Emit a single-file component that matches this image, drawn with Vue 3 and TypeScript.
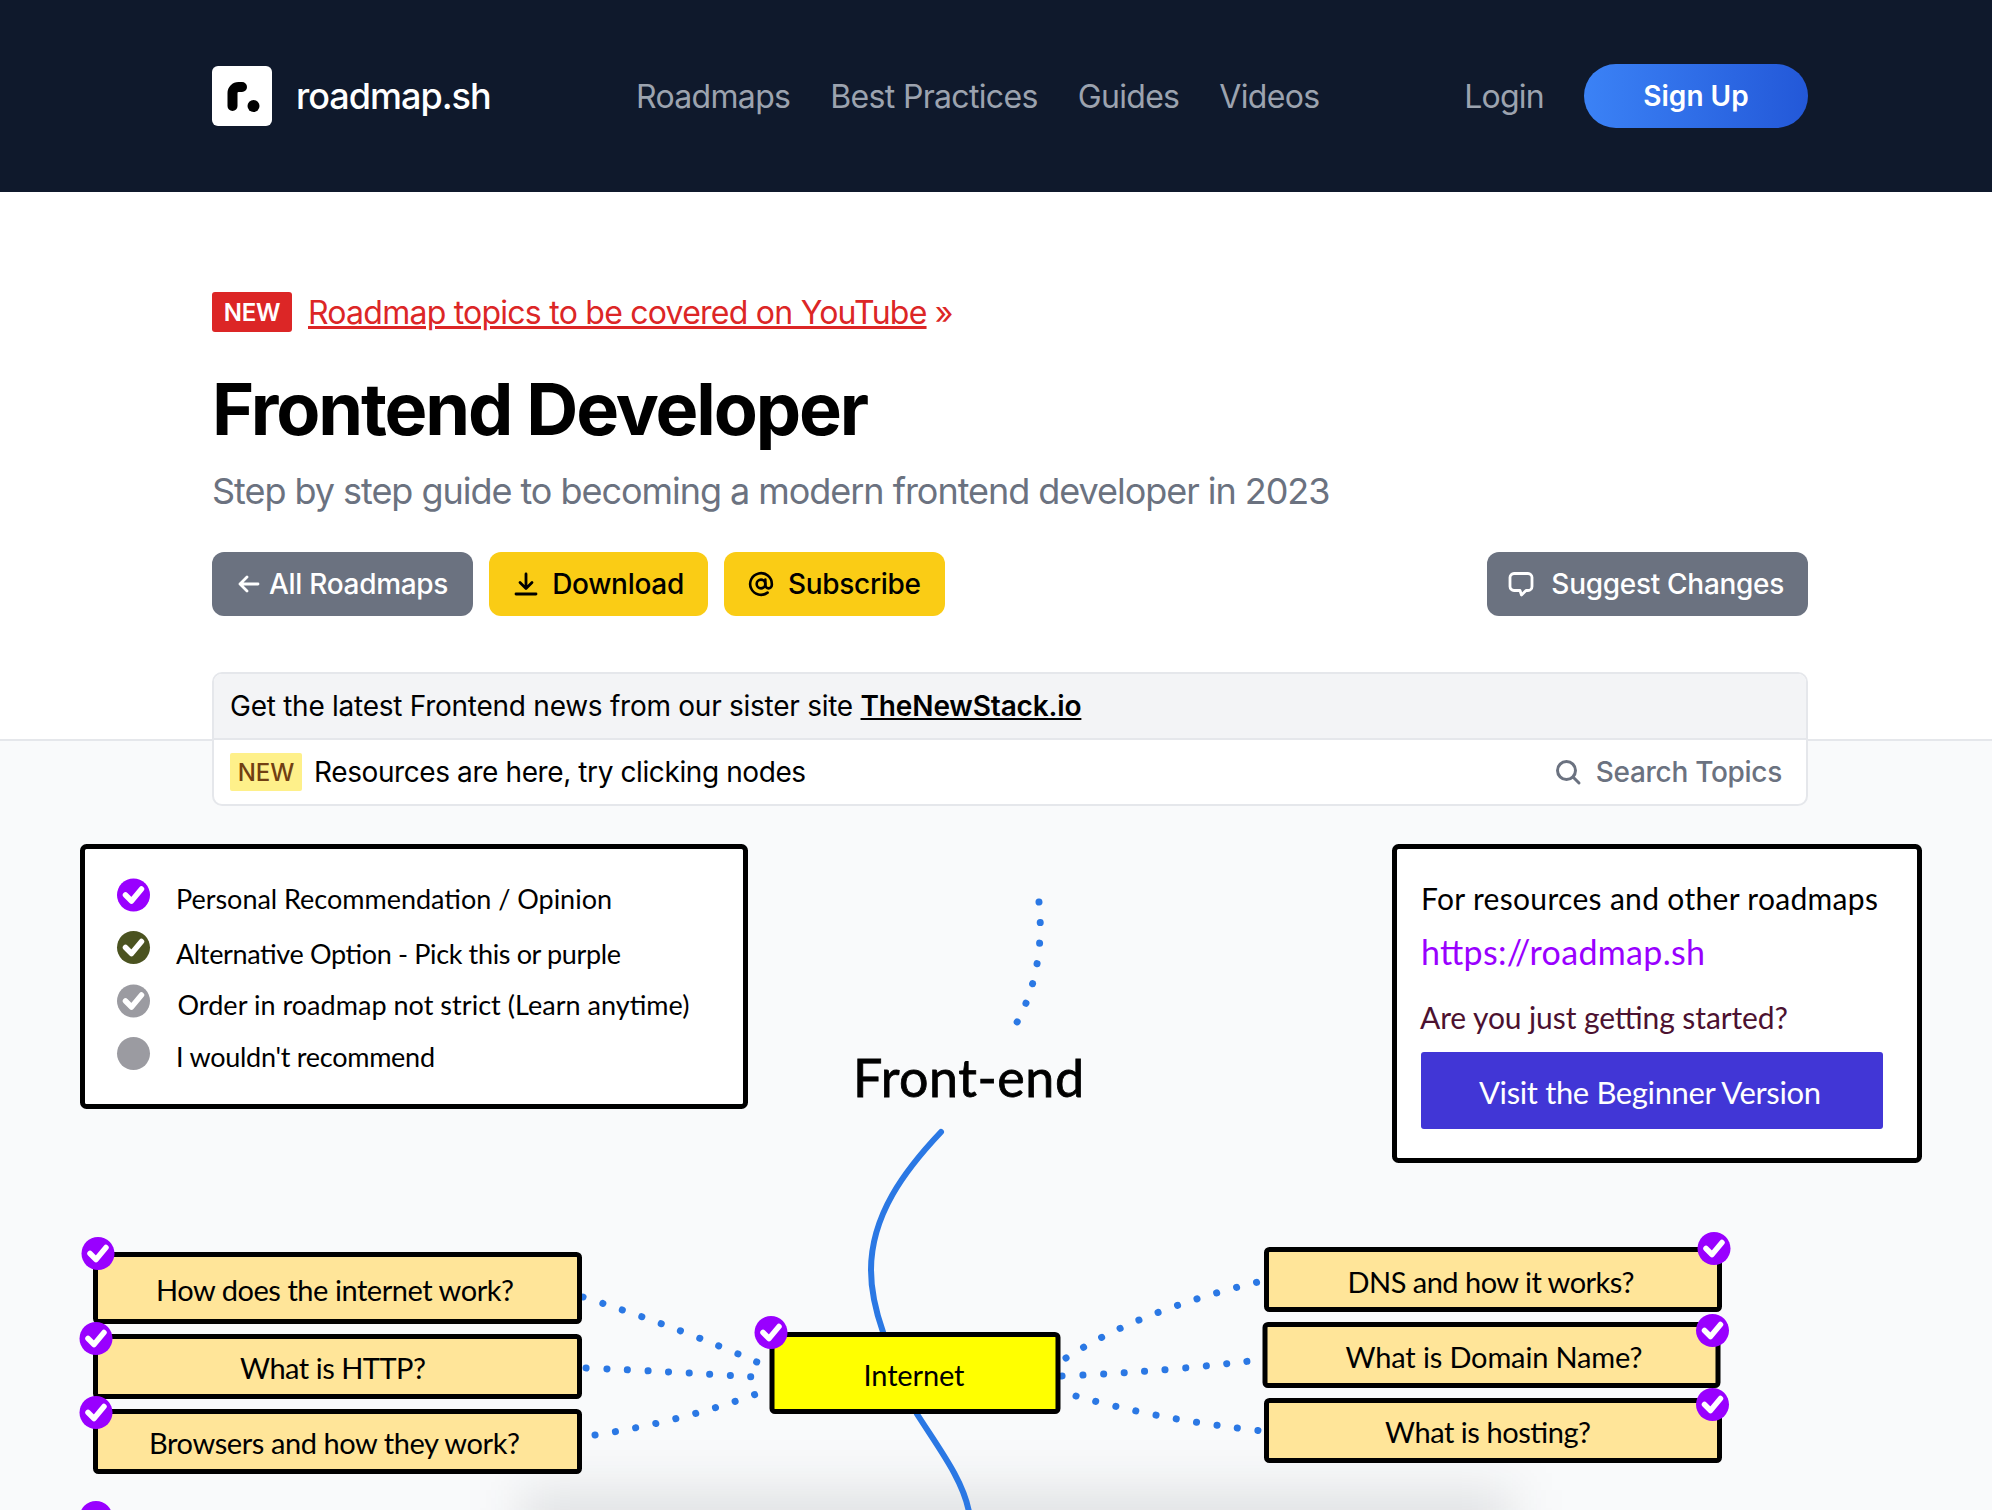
<script setup lang="ts">
type RoadNode = { label: string; x: number; y: number; w: number; h: number; tx: number; ty: number; len: number; cx: number; cy: number; fill?: string }

const nodes: RoadNode[] = [
  { label: "How does the internet work?", x: 95.5, y: 1254.5, w: 484, h: 67, tx: 335, ty: 1301, len: 358, cx: 98, cy: 1253.5 },
  { label: "What is HTTP?", x: 95.5, y: 1336.5, w: 484, h: 60, tx: 333, ty: 1379, len: 186, cx: 96, cy: 1338.5 },
  { label: "Browsers and how they work?", x: 95.5, y: 1411.5, w: 484, h: 60, tx: 334.5, ty: 1454, len: 371, cx: 96, cy: 1412.5 },
  { label: "Internet", x: 772, y: 1334.5, w: 286, h: 77, tx: 914, ty: 1386, len: 101, cx: 771, cy: 1332.5, fill: "#ffff00" },
  { label: "DNS and how it works?", x: 1266.5, y: 1249.5, w: 453, h: 60, tx: 1491, ty: 1293, len: 287, cx: 1714, cy: 1248.5 },
  { label: "What is Domain Name?", x: 1265, y: 1324.5, w: 453, h: 61, tx: 1494, ty: 1368, len: 297, cx: 1712.5, cy: 1330.5 },
  { label: "What is hosting?", x: 1266.5, y: 1400.5, w: 453, h: 60, tx: 1488, ty: 1443, len: 206, cx: 1712.5, cy: 1404.5 },
]

const legend = [
  { label: "Personal Recommendation / Opinion", color: "#9900ff", check: true, cy: 895, tx: 176, ty: 909, len: 436 },
  { label: "Alternative Option - Pick this or purple", color: "#4b5320", check: true, cy: 947.5, tx: 176, ty: 963.5, len: 445 },
  { label: "Order in roadmap not strict (Learn anytime)", color: "#9b9ba1", check: true, cy: 1001, tx: 177.5, ty: 1015, len: 512 },
  { label: "I wouldn't recommend", color: "#9b9ba1", check: false, cy: 1053.5, tx: 176, ty: 1067, len: 259 },
]

const dotted = [
  "M1039 902 C1043 940 1038 985 1016 1024",
  "M583 1297 Q680 1328 759 1363",
  "M586 1368 Q680 1372 753 1377",
  "M595 1435 Q680 1422 759 1393",
  "M1066 1358 Q1140 1310 1262 1281",
  "M1062 1376 Q1160 1372 1250 1361",
  "M1076 1396 Q1160 1420 1263 1431",
]

const extraChecks = [{ cx: 96, cy: 1517.5 }]
</script>

<template>
  <div class="page">
    <header class="nav">
      <div class="nav-inner">
        <a class="brand">
          <span class="logo">
            <svg width="60" height="60" viewBox="0 0 60 60">
              <path d="M20.500 40V27a6 6 0 0 1 6-6H30" fill="none" stroke="#000" stroke-width="10" stroke-linecap="round" stroke-linejoin="round" />
              <circle cx="41.500" cy="40" r="6" fill="#000" />
            </svg>
          </span>
          <span class="brand-name">roadmap.sh</span>
        </a>
        <nav class="links">
          <a>Roadmaps</a>
          <a>Best Practices</a>
          <a>Guides</a>
          <a>Videos</a>
        </nav>
        <div class="auth">
          <a class="login">Login</a>
          <a class="signup">Sign Up</a>
        </div>
      </div>
    </header>

    <section class="hero">
      <div class="announce">
        <span class="new-badge">NEW</span>
        <a class="announce-link"><u>Roadmap topics to be covered on YouTube</u> »</a>
      </div>
      <h1>Frontend Developer</h1>
      <p class="subtitle">Step by step guide to becoming a modern frontend developer in 2023</p>
      <div class="actions">
        <a class="btn grey back">
          <svg width="24" height="24" viewBox="0 0 24 24" fill="none" stroke="#fff" stroke-width="2.800" stroke-linecap="round" stroke-linejoin="round">
            <path d="M22 12H4M11 5l-7 7 7 7" />
          </svg>
          All Roadmaps
        </a>
        <a class="btn yellow">
          <svg width="28" height="28" viewBox="0 0 28 28" fill="none" stroke="#000" stroke-width="2.800" stroke-linecap="round" stroke-linejoin="round">
            <path d="M13 4v14M7 12.500l6 6 6-6M3 24h20" />
          </svg>
          Download
        </a>
        <a class="btn yellow subscribe">
          <svg width="26" height="26" viewBox="0 0 24 24" fill="none" stroke="#000" stroke-width="2.400" stroke-linecap="round" stroke-linejoin="round">
            <circle cx="12" cy="12" r="4" />
            <path d="M16 8v5a3 3 0 0 0 6 0v-1a10 10 0 1 0-3.920 7.940" />
          </svg>
          Subscribe
        </a>
        <a class="btn grey suggest">
          <svg width="28" height="28" viewBox="0 0 28 28" fill="none" stroke="#fff" stroke-width="2.800" stroke-linecap="round" stroke-linejoin="round">
            <path d="M7 3.500h14a4 4 0 0 1 4 4v9a4 4 0 0 1-4 4h-2l-4.500 4.500-1.500-4.500H7a4 4 0 0 1-4-4v-9a4 4 0 0 1 4-4z" />
          </svg>
          Suggest Changes
        </a>
      </div>
      <div class="notice">
        <div class="notice-top">Get the latest Frontend news from our sister site <a class="newstack">TheNewStack.io</a></div>
        <div class="notice-bottom">
          <span class="new-soft">NEW</span>
          <span class="resources">Resources are here, try clicking nodes</span>
          <span class="search">
            <svg width="28" height="28" viewBox="0 0 28 28" fill="none" stroke="#6b7280" stroke-width="3" stroke-linecap="round">
              <circle cx="12.500" cy="12.500" r="9" />
              <path d="M19.500 19.500l5.500 5.500" />
            </svg>
            Search Topics
          </span>
        </div>
      </div>
    </section>

    <main class="canvas">
      <div class="fade"></div>
      <svg class="roadmap" width="1992" height="769" viewBox="0 741 1992 769">
        <rect x="82.500" y="846.500" width="663" height="260" rx="4" class="panel" />
        <g v-for="item in legend" :key="item.label">
          <circle cx="133.500" :cy="item.cy" r="16.500" :fill="item.color" />
          <path v-if="item.check" :d="`M125.500 ${item.cy} l6 6 l10 -12`" class="check" />
          <text :x="item.tx" :y="item.ty" :textLength="item.len" class="legend-text">{{ item.label }}</text>
        </g>

        <rect x="1394.500" y="846.500" width="525" height="314" rx="4" class="panel" />
        <text x="1421" y="910" textLength="457" class="info-text">For resources and other roadmaps</text>
        <text x="1421" y="965" textLength="284" class="info-link">https://roadmap.sh</text>
        <text x="1420" y="1029" textLength="368" class="info-dark">Are you just getting started?</text>
        <rect x="1421" y="1052" width="462" height="77" rx="3" fill="#4136d6" />
        <text x="1650" y="1104" text-anchor="middle" textLength="342" class="info-btn">Visit the Beginner Version</text>

        <text x="853" y="1097" textLength="231" class="title">Front-end</text>

        <path d="M941 1132 C905 1170 871 1215 871 1270 C871 1292 876 1312 883 1332" class="line" />
        <path d="M917 1414 C940 1450 963 1480 969 1512" class="line" />
        <path v-for="d in dotted" :key="d" :d="d" class="dots" />

        <g v-for="node in nodes" :key="node.label">
          <rect :x="node.x" :y="node.y" :width="node.w" :height="node.h" rx="3" :fill="node.fill || '#ffe599'" class="box" />
          <text :x="node.tx" :y="node.ty" :textLength="node.len" text-anchor="middle" class="node-text">{{ node.label }}</text>
          <circle :cx="node.cx" :cy="node.cy" r="16.500" fill="#9900ff" />
          <path :d="`M${node.cx - 8} ${node.cy} l6 6 l10 -12`" class="check" />
        </g>
        <circle v-for="c in extraChecks" :key="c.cy" :cx="c.cx" :cy="c.cy" r="16.500" fill="#9900ff" />
      </svg>
    </main>
  </div>
</template>

<style>
html,
body {
  margin: 0;
  background: #fff;
}
</style>

<style scoped>
.page {
  width: 1992px;
  height: 1510px;
  overflow: hidden;
  font-family: Inter, "Liberation Sans", sans-serif;
  color: #000;
}

a {
  text-decoration: none;
}

.nav {
  height: 192px;
  background: #0f192c;
}

.nav-inner {
  display: flex;
  align-items: center;
  height: 192px;
  padding: 0 184px 0 212px;
}

.brand {
  display: flex;
  align-items: center;
  gap: 24px;
  color: #fff;
  width: 424px;
}

.logo {
  display: block;
  width: 60px;
  height: 60px;
  background: #fff;
  border-radius: 6px;
}

.logo svg {
  display: block;
}

.brand-name {
  font-size: 36px;
  font-weight: 500;
  letter-spacing: -1px;
}

.links {
  display: flex;
  gap: 40px;
  font-size: 32px;
  letter-spacing: -0.67px;
  color: #9ca3af;
}

.auth {
  margin-left: auto;
  display: flex;
  align-items: center;
  gap: 40px;
  font-size: 32px;
}

.login {
  color: #9ca3af;
  letter-spacing: -0.75px;
}

.signup {
  display: flex;
  align-items: center;
  justify-content: center;
  width: 224px;
  height: 64px;
  border-radius: 32px;
  color: #fff;
  font-weight: 600;
  font-size: 28px;
  background: linear-gradient(to right, #3b82f6, #2358d8);
}

.hero {
  height: 547px;
  box-sizing: border-box;
  padding: 100px 184px 0 212px;
  position: relative;
}

.announce {
  display: flex;
  align-items: center;
  gap: 16px;
  height: 40px;
}

.new-badge {
  display: flex;
  align-items: center;
  justify-content: center;
  width: 80px;
  height: 40px;
  background: #dc2626;
  color: #fff;
  font-size: 24px;
  font-weight: 600;
  letter-spacing: -0.2px;
  border-radius: 3px;
}

.announce-link {
  font-size: 32px;
  letter-spacing: -0.76px;
  color: #dc2626;
}

h1 {
  margin: 37px 0 0;
  font-size: 72px;
  line-height: 80px;
  font-weight: 700;
  letter-spacing: -2.1px;
}

.subtitle {
  margin: 18px 0 0;
  font-size: 36px;
  line-height: 48px;
  letter-spacing: -1.04px;
  color: #6b7280;
}

.actions {
  display: flex;
  gap: 16px;
  margin-top: 37px;
}

.btn {
  display: flex;
  align-items: center;
  height: 64px;
  box-sizing: border-box;
  border-radius: 12px;
  font-size: 28px;
  font-weight: 500;
  letter-spacing: -0.3px;
}

.grey {
  background: #6b7280;
  color: #fff;
}

.yellow {
  background: #facc15;
  color: #000;
  padding: 0 24px;
  gap: 11px;
}

.subscribe {
  gap: 14px;
}

.back {
  padding: 0 25px 0 24px;
  gap: 9px;
}

.suggest {
  margin-left: auto;
  padding: 0 24px 0 20px;
  gap: 16px;
}

.notice {
  position: absolute;
  left: 212px;
  right: 184px;
  top: 480px;
  border: 2px solid #e5e7eb;
  border-radius: 10px;
  background: #fff;
  font-size: 28px;
  overflow: hidden;
  z-index: 2;
}

.notice-top {
  height: 64px;
  line-height: 64px;
  padding: 0 16px;
  background: #f3f4f6;
  border-bottom: 2px solid #e5e7eb;
  letter-spacing: -0.26px;
}

.newstack {
  font-weight: 600;
  letter-spacing: -0.15px;
  text-decoration: underline;
  color: #000;
}

.notice-bottom {
  height: 64px;
  display: flex;
  align-items: center;
  padding: 0 24px 0 16px;
}

.new-soft {
  display: flex;
  align-items: center;
  justify-content: center;
  width: 72px;
  height: 38px;
  background: #fef08a;
  color: #713f12;
  font-size: 24px;
  font-weight: 500;
  border-radius: 2px;
  margin-right: 12px;
}

.resources {
  letter-spacing: -0.4px;
}

.search {
  margin-left: auto;
  display: flex;
  align-items: center;
  gap: 14px;
  color: #6b7280;
  font-weight: 500;
  letter-spacing: -0.3px;
}

.canvas {
  position: relative;
  height: 771px;
  background: #f9fafb;
  border-top: 2px solid #e5e7eb;
  box-sizing: border-box;
  overflow: hidden;
}

.roadmap {
  display: block;
  position: relative;
}

.panel {
  fill: #fff;
  stroke: #000;
  stroke-width: 5;
}

.box {
  stroke: #000;
  stroke-width: 5;
}

.check {
  fill: none;
  stroke: #fff;
  stroke-width: 5.500;
  stroke-linecap: round;
  stroke-linejoin: round;
}

.legend-text,
.node-text,
.info-text,
.info-link,
.info-dark,
.info-btn,
.title {
  font-family: Lato, "Open Sans", sans-serif;
}

.legend-text {
  font-size: 27px;
}

.node-text {
  font-size: 29px;
}

.info-text,
.info-dark {
  font-size: 30px;
}

.info-link {
  font-size: 34px;
  fill: #9900ff;
}

.info-dark {
  fill: #4c1130;
}

.info-btn {
  font-size: 31px;
  fill: #fff;
}

.title {
  font-size: 52px;
  stroke: #000;
  stroke-width: 0.8;
}

.line {
  fill: none;
  stroke: #2b78e4;
  stroke-width: 6;
  stroke-linecap: round;
}

.dots {
  fill: none;
  stroke: #2b78e4;
  stroke-width: 7;
  stroke-linecap: round;
  stroke-dasharray: 0.1 20.5;
}

.fade {
  position: absolute;
  left: 520px;
  right: 480px;
  bottom: -50px;
  height: 70px;
  background: rgba(17, 24, 39, 0.11);
  filter: blur(26px);
}
</style>
